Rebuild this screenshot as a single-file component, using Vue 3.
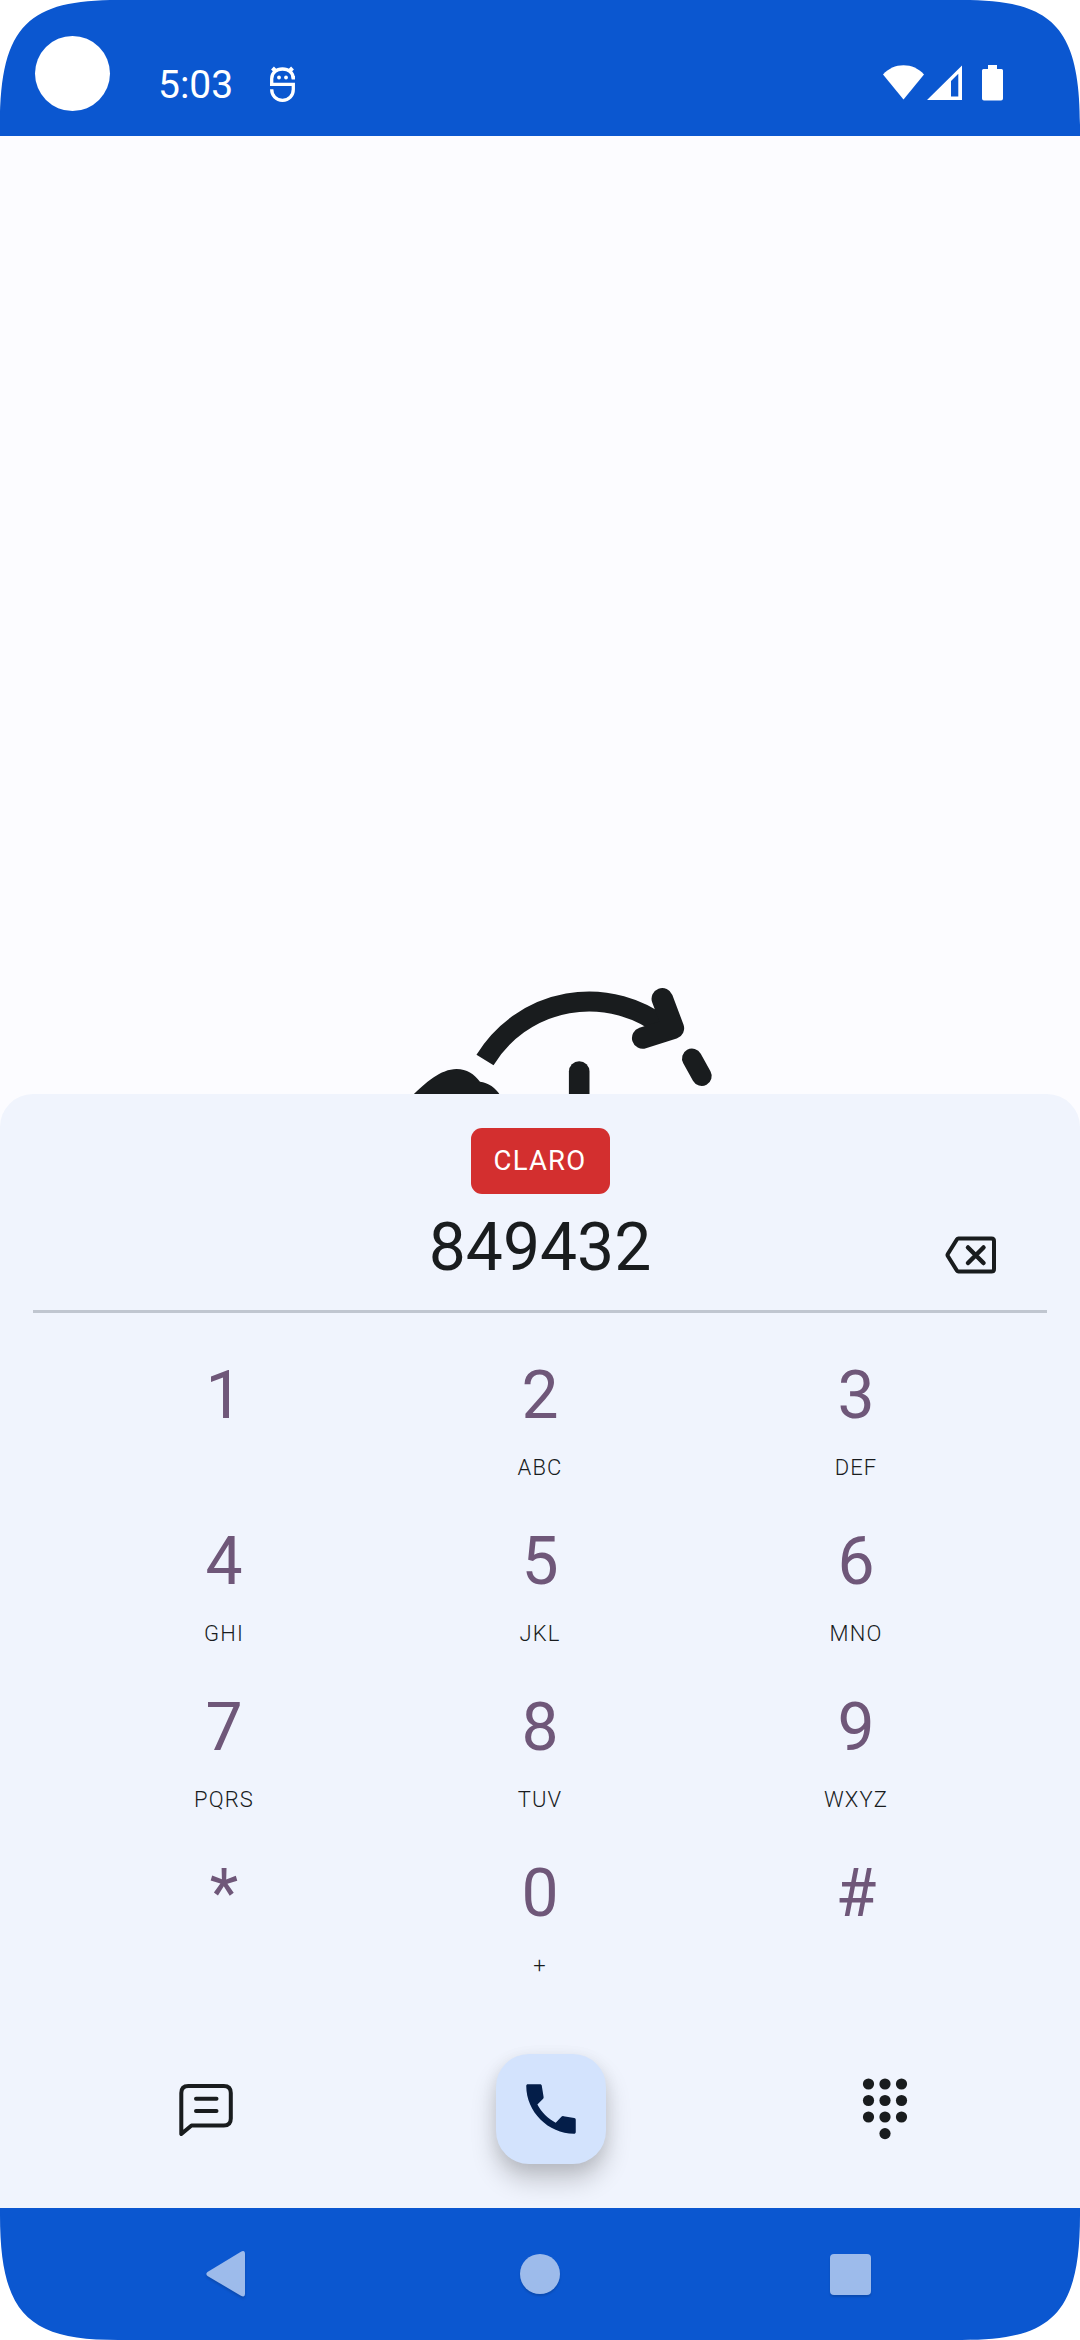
<script setup>
import { ref } from 'vue';

const number = ref('849432');
const carrier = ref('CLARO');

const keys = [
  { digit: '1', letters: '' },
  { digit: '2', letters: 'ABC' },
  { digit: '3', letters: 'DEF' },
  { digit: '4', letters: 'GHI' },
  { digit: '5', letters: 'JKL' },
  { digit: '6', letters: 'MNO' },
  { digit: '7', letters: 'PQRS' },
  { digit: '8', letters: 'TUV' },
  { digit: '9', letters: 'WXYZ' },
  { digit: '*', letters: '' },
  { digit: '0', letters: '+' },
  { digit: '#', letters: '' },
];

function press(digit) {
  number.value += digit;
}

function erase() {
  number.value = number.value.slice(0, -1);
}
</script>

<template>
  <div class="phone">
    <header class="status-bar">
      <div class="camera"></div>
      <span class="time">5:03</span>
      <svg class="debug" viewBox="0 0 26 36" fill="none" stroke="#fff" stroke-width="3.3">
        <path d="M1.7 18.4V12.7C1.7 6.5 6.5 3 12.5 3s10.8 3.5 10.8 9.7" />
        <path d="M2.5 2l4 4M22.5 2l-4 4" stroke-width="4" />
        <path d="M0 18.4h23.3v4.8c0 6.5-4.4 11.1-10.8 11.1S1.7 29.7 1.7 23.2" />
        <path d="M23.3 10v3.5" />
        <circle cx="9" cy="11.5" r="1.9" fill="#fff" stroke="none" />
        <circle cx="16" cy="11.5" r="1.9" fill="#fff" stroke="none" />
      </svg>
      <svg class="indicators" viewBox="0 0 122 36" fill="#fff">
        <path d="M0 9.5C5.5 3.5 12.5 0.3 20.5 0.3S35.5 3.5 41 9.5L20.5 34.5z" />
        <path fill-rule="evenodd" d="M44 35L79 0.5V35zM68 16V31.5H75.3V8.8z" />
        <path d="M105 0h9v4h4.5q1.5 0 1.5 1.5v28q0 2-2 2H101q-2 0-2-2v-28q0-1.5 1.5-1.5h4.5z" />
      </svg>
    </header>

    <main class="content">
      <svg class="history" viewBox="400 975 320 120" fill="none" stroke="#191c1e">
        <path d="M485 1060A122 122 0 0 1 665 1028" stroke-width="20" />
        <path d="M662.3 998.7L673.4 1028.3L642.7 1038" stroke-width="21.5" stroke-linecap="round" stroke-linejoin="round" />
        <path d="M692 1058.5L701.7 1076" stroke-width="20" stroke-linecap="round" />
        <path d="M579.2 1071.5V1100" stroke-width="20.6" stroke-linecap="round" />
        <path d="M413 1095C425 1083 441 1069 456.5 1069C467 1069 474 1074 480 1081.7C488 1082.5 496 1088 500 1095z" fill="#191c1e" stroke="none" />
      </svg>
    </main>

    <section class="sheet">
      <div class="carrier">{{ carrier }}</div>
      <div class="entry">
        <span class="number">{{ number }}</span>
        <button class="erase" @click="erase">
          <svg viewBox="0 0 54 40" fill="none" stroke="#191c1e" stroke-width="4" stroke-linejoin="round" stroke-linecap="round">
            <path d="M13.5 3.5H46.5Q49 3.5 49 6V34Q49 36.5 46.5 36.5H13.5Q12.5 36.5 12 35.7L2.8 21Q2.2 20 2.8 19L12 4.3Q12.5 3.5 13.5 3.5z" />
            <path d="M23 12.5L38.5 28M38.5 12.5L23 28" stroke-width="4.5" />
          </svg>
        </button>
      </div>
      <div class="divider"></div>

      <div class="keypad">
        <button v-for="key in keys" :key="key.digit" class="key" @click="press(key.digit)">
          <span class="digit">{{ key.digit }}</span>
          <span class="letters">{{ key.letters }}</span>
        </button>
      </div>

      <div class="actions">
        <button class="message">
          <svg viewBox="0 0 66 66" fill="none" stroke="#191c1e" stroke-width="4" stroke-linecap="round" stroke-linejoin="round">
            <path d="M8.3 58V17Q8.3 10 15.3 10H50.8Q57.8 10 57.8 17V42.5Q57.8 49.5 50.8 49.5H18.5z" />
            <path d="M23 22.7H43.5M23 35H43.5" />
          </svg>
        </button>
        <button class="call">
          <svg viewBox="0 0 24 24" fill="#041e49">
            <path d="M3.6 3H8c.35 0 .6.2.65.55l.65 4c.05.3 0 .6-.25.85L7.05 10.4c1.4 2.7 3.9 5.2 6.65 6.6l2-2.1c.2-.25.5-.35.85-.3l3.9.7c.35.07.55.3.55.65v4.4c0 .4-.25.65-.65.65C11 21 3 13 3 3.65 3 3.25 3.2 3 3.6 3z" />
          </svg>
        </button>
        <button class="dialpad">
          <svg viewBox="0 0 66 66" fill="#191c1e">
            <template v-for="y in 3" :key="y">
              <circle v-for="x in 3" :key="x" :cx="x * 16.5" :cy="y * 16.5 - 8.5" r="5.6" />
            </template>
            <circle cx="33" cy="57.6" r="5.6" />
          </svg>
        </button>
      </div>
    </section>

    <nav class="nav-bar">
      <svg class="back" viewBox="0 0 40 46" fill="#9dbbeb">
        <path d="M34.5 1Q39 -1.5 39 3V43Q39 47 34.5 44.5L1.5 25Q-0.8 23 1.5 21z" />
      </svg>
      <div class="home"></div>
      <div class="recents"></div>
    </nav>

    <!-- rounded display corners -->
    <svg
      v-for="corner in ['top-left', 'top-right', 'bottom-left', 'bottom-right']"
      :key="corner"
      :class="['corner', corner]"
      viewBox="0 0 120 126"
    >
      <path d="M0 0H118C30 0 0 24 0 125z" fill="#fff" />
    </svg>
  </div>
</template>

<style>
  body {
    margin: 0;
    background: #fff;
  }
</style>

<style scoped>
  .phone {
    position: relative;
    display: flex;
    flex-direction: column;
    width: 1080px;
    height: 2340px;
    overflow: hidden;
    background: #fcfcff;
    color: #191c1e;
    font-family: Roboto, sans-serif;
  }
  button {
    display: flex;
    padding: 0;
    border: none;
    background: none;
    color: inherit;
    font-family: inherit;
    cursor: pointer;
  }
  svg {
    display: block;
    flex-shrink: 0;
  }
  .status-bar {
    display: flex;
    align-items: flex-start;
    box-sizing: border-box;
    height: 136px;
    padding: 36px 77px 0 35px;
    background: #0b57d0;
    color: #fff;
  }
  .camera {
    width: 75px;
    height: 75px;
    border-radius: 50%;
    background: #fff;
  }
  .time {
    width: 112px;
    margin: 26px 0 0 48px;
    font-size: 39px;
    line-height: 46px;
  }
  .debug {
    width: 26px;
    height: 36px;
    margin-top: 30px;
  }
  .indicators {
    width: 122px;
    height: 36px;
    margin: 29px -2px 0 auto;
  }
  .content {
    display: flex;
    align-items: flex-end;
    height: 959px;
  }
  .history {
    width: 320px;
    height: 120px;
    margin-left: 400px;
  }
  .sheet {
    display: flex;
    flex-direction: column;
    align-items: center;
    box-sizing: border-box;
    height: 1114px;
    margin-top: -1px;
    padding-top: 34px;
    border-radius: 33px 33px 0 0;
    background: #f0f4fd;
  }
  .carrier {
    box-sizing: border-box;
    width: 139px;
    height: 66px;
    border-radius: 11px;
    background: #d32f2f;
    color: #fff;
    font-size: 27.5px;
    letter-spacing: 1.2px;
    line-height: 65px;
    text-align: center;
  }
  .entry {
    display: grid;
    grid-template-columns: 1fr auto 1fr;
    width: 100%;
    height: 116px;
  }
  .number {
    grid-column: 2;
    margin-top: 15px;
    font-size: 66px;
    line-height: 77px;
  }
  .erase {
    justify-self: end;
    align-self: start;
    margin: 41px 81px 0 0;
  }
  .erase svg {
    width: 54px;
    height: 40px;
  }
  .divider {
    width: 1014px;
    height: 3px;
    background: #c0c6d0;
  }
  .keypad {
    display: grid;
    grid-template-columns: repeat(3, 316px);
    grid-auto-rows: 166px;
    margin-top: 44px;
  }
  .key {
    flex-direction: column;
    align-items: center;
    justify-content: flex-start;
  }
  .digit {
    color: #6f5779;
    font-size: 66px;
    line-height: 77px;
  }
  .letters {
    margin-top: 21px;
    font-size: 22px;
    font-weight: 300;
    letter-spacing: 1.1px;
    line-height: 26px;
  }
  .actions {
    display: flex;
    align-items: center;
    align-self: flex-start;
    height: 110px;
    margin-top: 33px;
    margin-left: 173px;
  }
  .message svg,
  .dialpad svg,
  .call svg {
    width: 66px;
    height: 66px;
  }
  .call {
    align-items: center;
    justify-content: center;
    width: 110px;
    height: 110px;
    margin-left: 257px;
    border-radius: 33px;
    background: #d3e3fd;
    box-shadow: 0 16px 26px rgba(0, 0, 0, 0.2), 0 4px 16px rgba(0, 0, 0, 0.08);
  }
  .dialpad {
    margin-left: 246px;
  }
  .nav-bar {
    display: flex;
    align-items: center;
    box-sizing: border-box;
    height: 132px;
    padding-left: 206px;
    background: #0b57d0;
  }
  .back {
    width: 40px;
    height: 46px;
    filter: drop-shadow(0 2px 1px rgba(0, 0, 0, 0.15));
  }
  .home,
  .recents {
    width: 41px;
    height: 41px;
    background: #9dbbeb;
    box-shadow: 0 2px 2px rgba(0, 0, 0, 0.15);
  }
  .home {
    width: 40px;
    height: 40px;
    margin-left: 274px;
    border-radius: 50%;
  }
  .recents {
    margin-left: 270px;
    border-radius: 4px;
  }
  .corner {
    position: absolute;
    width: 120px;
    height: 126px;
  }
  .top-left {
    top: 0;
    left: 0;
  }
  .top-right {
    top: 0;
    right: 0;
    transform: scaleX(-1);
  }
  .bottom-left {
    bottom: 0;
    left: 0;
    transform: scaleY(-1);
  }
  .bottom-right {
    right: 0;
    bottom: 0;
    transform: scale(-1, -1);
  }
</style>
